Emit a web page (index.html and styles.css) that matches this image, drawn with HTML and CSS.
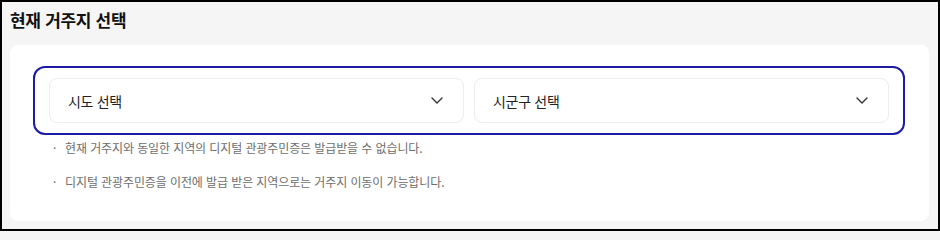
FILE: index.html
```html
<!DOCTYPE html>
<html lang="ko">
<head>
<meta charset="utf-8">
<link rel="stylesheet" href="styles.css">
</head>
<body>
<div class="frame">
  <h2 class="title">현재 거주지 선택</h2>
  <div class="card">
    <div class="selects">
      <div class="select">
        <span class="select-label">시도 선택</span>
        <svg class="chevron" width="12" height="7" viewBox="0 0 12 7"><path d="M1 1l5 5 5-5" fill="none" stroke="#333" stroke-width="1.4" stroke-linecap="round" stroke-linejoin="round"/></svg>
      </div>
      <div class="select">
        <span class="select-label">시군구 선택</span>
        <svg class="chevron" width="12" height="7" viewBox="0 0 12 7"><path d="M1 1l5 5 5-5" fill="none" stroke="#333" stroke-width="1.4" stroke-linecap="round" stroke-linejoin="round"/></svg>
      </div>
    </div>
    <ul class="notes">
      <li>현재 거주지와 동일한 지역의 디지털 관광주민증은 발급받을 수 없습니다.</li>
      <li>디지털 관광주민증을 이전에 발급 받은 지역으로는 거주지 이동이 가능합니다.</li>
    </ul>
  </div>
</div>
</body>
</html>
```

FILE: styles.css
```css
* { box-sizing: border-box; }
html, body { margin: 0; padding: 0; }
body {
  font-family: "Noto Sans CJK KR", "Noto Sans", sans-serif;
  background: #f5f5f5;
}
.frame {
  width: 940px;
  height: 231px;
  border: 2px solid #000;
  background: #f5f5f5;
  padding: 5px 9px 0 8px;
}
.title {
  margin: 0 0 12px 0;
  font-size: 17px;
  line-height: 26px;
  font-weight: 700;
  color: #111;
  letter-spacing: -0.3px;
}
.card {
  height: 176px;
  background: #fff;
  border-radius: 8px;
  padding: 21px 24px 0 23px;
}
.selects {
  display: flex;
  gap: 10px;
  border: 2px solid #1b1ba6;
  border-radius: 12px;
  padding: 10px 14px;
}
.select {
  flex: 1;
  height: 45px;
  border: 1px solid #ededed;
  border-radius: 8px;
  display: flex;
  align-items: center;
  justify-content: space-between;
  padding: 0 20px 0 18px;
}
.select-label {
  font-size: 14px;
  color: #222;
  letter-spacing: -0.3px;
}
.chevron { display: block; }
.notes {
  list-style: none;
  margin: 4px 0 0 0;
  padding: 0 0 0 20px;
}
.notes li {
  display: flex;
  font-size: 12px;
  line-height: 18px;
  color: #6e6e6e;
  letter-spacing: -0.1px;
  margin-bottom: 16px;
}
.notes li::before {
  content: "·";
  width: 12px;
  flex: none;
}
```
